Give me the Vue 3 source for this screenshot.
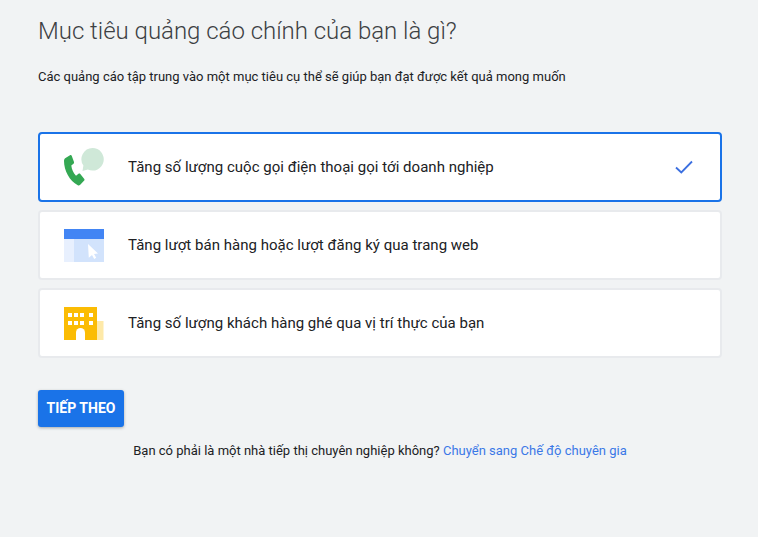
<script setup>
const goals = [
  { id: 'call', label: 'Tăng số lượng cuộc gọi điện thoại gọi tới doanh nghiệp', selected: true },
  { id: 'web', label: 'Tăng lượt bán hàng hoặc lượt đăng ký qua trang web', selected: false },
  { id: 'store', label: 'Tăng số lượng khách hàng ghé qua vị trí thực của bạn', selected: false }
]
</script>

<template>
  <div class="page">
    <h1 class="title">Mục tiêu quảng cáo chính của bạn là gì?</h1>
    <p class="subtitle">Các quảng cáo tập trung vào một mục tiêu cụ thể sẽ giúp bạn đạt được kết quả mong muốn</p>

    <div class="goals">
      <div v-for="goal in goals" :key="goal.id" class="goal" :class="{ selected: goal.selected }">
        <svg v-if="goal.id === 'call'" class="goal-icon" width="42" height="40" viewBox="0 0 42 40">
          <path fill="#cfe8d8" d="M28.500 1a11.300 11.300 0 1 1-4.700 21.600L18.500 24l.9-5.400A11.300 11.300 0 0 1 28.500 1z" />
          <path fill="#34a853" d="M1.500 11L6 8.300c.8-.4 1.500-.1 1.800.6l2.200 6.200c.2.700 0 1.200-.5 1.600l-2.200 1.800c.5 4 2 7.500 4.700 10.300l2.500-2c.6-.5 1.300-.4 1.800.1l4 5c.4.600.4 1.200-.1 1.700L16 38c-.7.500-1.500.6-2.200.2C5.500 34 0 23.500 0 14c0-1.300.5-2.300 1.500-3z" />
        </svg>
        <svg v-else-if="goal.id === 'web'" class="goal-icon" width="42" height="40" viewBox="0 0 42 40">
          <rect x="0" y="4" width="40" height="10" fill="#4285f4" />
          <rect x="0" y="14" width="10" height="23" fill="#e8f0fe" />
          <rect x="10" y="14" width="30" height="23" fill="#d2e3fc" />
          <path fill="#fff" d="M24 19l10 9.500-4 .4 2.200 3.800-2 1.200-2.200-4-3.200 2.800z" />
        </svg>
        <svg v-else class="goal-icon" width="42" height="40" viewBox="0 0 42 40">
          <rect x="33" y="18" width="6.500" height="19" fill="#fee9a8" />
          <rect x="0" y="4" width="33" height="33" fill="#fbbc04" />
          <g fill="#fff">
            <rect x="4" y="10" width="4" height="4" /><rect x="10" y="10" width="4" height="4" /><rect x="16" y="10" width="4" height="4" /><rect x="25" y="10" width="4" height="4" />
            <rect x="4" y="18" width="4" height="4" /><rect x="10" y="18" width="4" height="4" /><rect x="16" y="18" width="4" height="4" /><rect x="25" y="18" width="4" height="4" />
            <path d="M12 37v-7.500a4.500 4.500 0 0 1 9 0V37z" />
          </g>
        </svg>
        <span class="goal-label">{{ goal.label }}</span>
        <svg v-if="goal.selected" class="check" width="18" height="14" viewBox="0 0 18 14">
          <path fill="none" stroke="#3b6fe0" stroke-width="1.800" d="M1 7.500l5.300 5L17 1.500" />
        </svg>
      </div>
    </div>

    <button class="next-btn">TIẾP THEO</button>
    <p class="expert">
      Bạn có phải là một nhà tiếp thị chuyên nghiệp không?
      <a class="expert-link">Chuyển sang Chế độ chuyên gia</a>
    </p>
  </div>
</template>

<style scoped>
.page {
  box-sizing: border-box;
  width: 758px;
  height: 537px;
  padding: 16px 36px 0 38px;
  background-color: #f1f3f4;
  font-family: Roboto, "Liberation Sans", sans-serif;
  color: #202124;
  overflow: hidden;
}
.title {
  margin: 0;
  font-size: 24px;
  line-height: 30px;
  font-weight: 300;
  letter-spacing: -0.02px;
  color: #3c4043;
}
.subtitle {
  margin: 22px 0 0;
  font-size: 13px;
  line-height: 18px;
}
.goals {
  display: flex;
  flex-direction: column;
  gap: 8px;
  margin-top: 46px;
}
.goal {
  box-sizing: border-box;
  display: flex;
  align-items: center;
  height: 70px;
  padding: 0 27px 0 24px;
  background-color: #fff;
  border: 2px solid #e8eaed;
  border-radius: 4px;
}
.goal.selected {
  border-color: #1a73e8;
}
.goal-icon {
  flex: none;
}
.goal-label {
  flex: 1;
  margin-left: 22px;
  font-size: 15px;
  letter-spacing: 0.02px;
}
.check {
  flex: none;
}
.next-btn {
  display: block;
  width: 86px;
  height: 37px;
  margin-top: 32px;
  padding: 0 0 1px;
  border: none;
  border-radius: 3px;
  background-color: #1a73e8;
  box-shadow: 0 1px 3px rgba(60, 64, 67, 0.4);
  color: #fff;
  font-family: inherit;
  font-size: 14px;
  font-weight: 700;
}
.expert {
  margin: 15px 0 0;
  text-align: center;
  font-size: 13px;
  line-height: 18px;
}
.expert-link {
  color: #3b78e7;
}
</style>
